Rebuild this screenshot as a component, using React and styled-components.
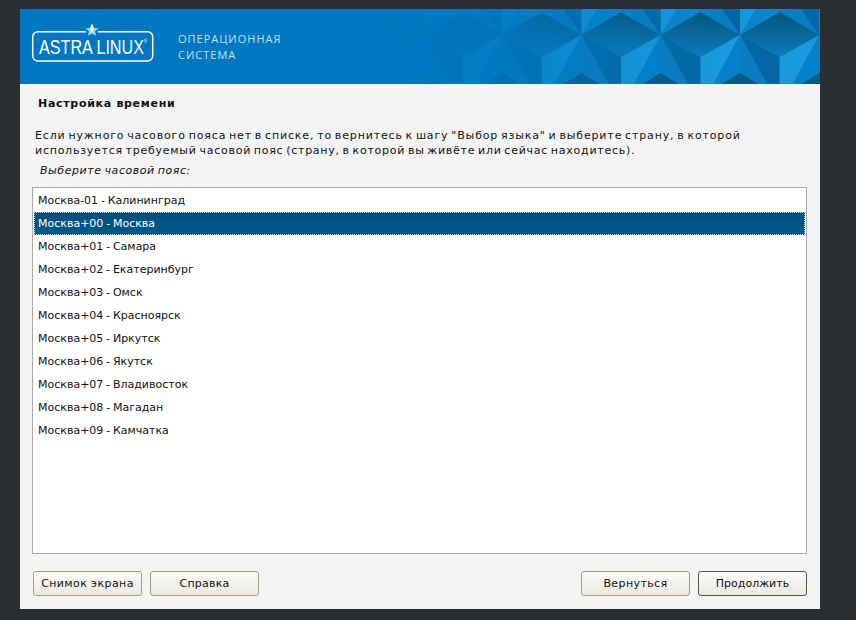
import React from 'react';
import styled, { createGlobalStyle } from 'styled-components';

const GlobalStyle = createGlobalStyle`
  html, body {
    margin: 0;
    padding: 0;
    background: #2a2d32;
  }
`;

const Page = styled.div`
  width: 856px;
  height: 620px;
  padding: 9px 0 0 20px;
  box-sizing: border-box;
  overflow: hidden;
  font-family: "DejaVu Sans", sans-serif;
  font-size: 11px;
  color: #111;
`;

const Installer = styled.div`
  width: 800px;
  height: 600px;
  display: flex;
  flex-direction: column;
  background: #f4f4f4;
`;

const Header = styled.header`
  height: 75px;
  flex: none;
  display: flex;
  background: #0077c0;
`;

const LogoBox = styled.div`
  width: 138px;
  flex: none;
  margin-left: 10px;
`;

const Tagline = styled.div`
  margin: 22px 0 0 10px;
  font-family: "Open Sans", sans-serif;
  font-size: 11px;
  line-height: 16px;
  letter-spacing: 1px;
  color: #c4e2f6;
`;

const Pattern = styled.svg`
  margin-left: auto;
  flex: none;
  display: block;
`;

const Content = styled.main`
  flex: 1;
  display: flex;
  flex-direction: column;
  padding: 11px 13px 13px 12px;
`;

const Title = styled.h1`
  margin: 0 0 0 6px;
  font-size: 11px;
  line-height: 18px;
  font-weight: bold;
  letter-spacing: 0.7px;
  color: #111;
`;

const Description = styled.div`
  margin: 15px 0 0 3px;
  white-space: nowrap;
`;

const DescriptionLine = styled.p`
  margin: 0;
  line-height: 15px;
  letter-spacing: ${({ $spacing }) => $spacing}px;
  word-spacing: -1.5px;
`;

const Prompt = styled.div`
  margin: 5px 0 8px 8px;
  line-height: 16px;
  font-style: italic;
  letter-spacing: 0.55px;
  word-spacing: -1px;
`;

const List = styled.ul`
  height: 367px;
  box-sizing: border-box;
  margin: 0;
  padding: 1px;
  list-style: none;
  background: #fff;
  border: 1px solid #aaa;
`;

const Row = styled.li`
  height: 23px;
  box-sizing: border-box;
  padding-left: 4px;
  line-height: 24px;
  white-space: nowrap;
  word-spacing: -0.7px;
  ${({ $selected }) => $selected && `
    color: #fff;
    line-height: 21px;
    padding-left: 3px;
    background: linear-gradient(#004e7c, #05578a);
    border: 1px dotted #bfe3f5;
  `}
`;

const Footer = styled.footer`
  display: flex;
  gap: 8px;
  margin-top: 17px;
  padding-left: 1px;
`;

const Button = styled.button`
  width: 109px;
  height: 25px;
  padding: 0;
  font: inherit;
  letter-spacing: ${({ $spacing }) => $spacing ?? 0.4}px;
  color: #111;
  background: linear-gradient(#fbfbf9, #ece9e3);
  border: 1px solid ${({ $default }) => ($default ? '#57544d' : '#a39b8b')};
  border-radius: 3px;
`;

const Spacer = styled.div`
  flex: 1;
`;

const zones = [
  'Москва-01 - Калининград',
  'Москва+00 - Москва',
  'Москва+01 - Самара',
  'Москва+02 - Екатеринбург',
  'Москва+03 - Омск',
  'Москва+04 - Красноярск',
  'Москва+05 - Иркутск',
  'Москва+06 - Якутск',
  'Москва+07 - Владивосток',
  'Москва+08 - Магадан',
  'Москва+09 - Камчатка',
];

const Logo = () => (
  <svg width="138" height="75" viewBox="0 0 138 75">
    <path
      d="M56 22.8H7.7a5 5 0 0 0-5 5V47a5 5 0 0 0 5 5h110a5 5 0 0 0 5-5V27.8a5 5 0 0 0-5-5H68"
      fill="none"
      stroke="#fff"
      strokeWidth="1.5"
    />
    <polygon
      points="62,14.5 63.9,18.9 68.5,19.3 65,22.3 66,26.8 62,24.5 58,26.8 59,22.3 55.5,19.3 60.1,18.9"
      fill="#a9d4ef"
    />
    <polygon points="62,14.5 63.9,18.9 62,24.5 60.1,18.9" fill="#e4f3fb" />
    <text
      x="9"
      y="44.5"
      fontFamily="'Liberation Sans Narrow', 'Liberation Sans', sans-serif"
      fontSize="19.5"
      fill="#fff"
      textLength="108"
      lengthAdjust="spacingAndGlyphs"
    >
      ASTRA LINUX
      <tspan dy="-11" fontSize="5">®</tspan>
    </text>
  </svg>
);

const fadeStops = [
  [0, 1],
  [0.1, 0.94],
  [0.28, 0.78],
  [0.45, 0.42],
  [0.64, 0.12],
  [0.8, 0],
];

const HeaderPattern = () => (
  <Pattern width="440" height="75" viewBox="0 0 440 75">
    <defs>
      <linearGradient id="diamond" x1="0" y1="0" x2="0" y2="1">
        <stop offset="0" stopColor="#045478" />
        <stop offset="1" stopColor="#0f7bbf" />
      </linearGradient>
      <linearGradient id="fade" x1="0" y1="0" x2="1" y2="0">
        {fadeStops.map(([offset, opacity]) => (
          <stop key={offset} offset={offset} stopColor="#0077c0" stopOpacity={opacity} />
        ))}
      </linearGradient>
      <pattern id="cubes" x="42.8" y="0" width="79.3" height="75" patternUnits="userSpaceOnUse">
        <rect width="79.3" height="75" fill="#0a80c8" />
        <polygon points="0,26 0,0 16,0" fill="#1a96db" />
        <polygon points="0,26 16,0 45,0 39.65,3.3" fill="#0a84cc" />
        <polygon points="39.65,3.3 39.65,0 61,0 79.3,26" fill="#0b7cc2" />
        <polygon points="61,0 79.3,0 79.3,26" fill="#0467a5" />
        <polygon points="0,26 39.65,3.3 79.3,26 39.65,48.3" fill="url(#diamond)" />
        <polygon points="0,26 39.65,48.3 39.65,75 27,75" fill="#0467a5" />
        <polygon points="0,26 27,75 0,75" fill="#0b7cc2" />
        <polygon points="39.65,48.3 79.3,26 52.6,75 39.65,75" fill="#1a9ade" />
        <polygon points="79.3,26 52.6,75 79.3,75" fill="#0580cb" />
        <polygon points="0,64 18,75 0,75" fill="#045a85" />
        <polygon points="79.3,64 79.3,75 61.3,75" fill="#045a85" />
      </pattern>
    </defs>
    <rect width="440" height="75" fill="url(#cubes)" />
    <rect width="440" height="75" fill="url(#fade)" />
  </Pattern>
);

export default function App() {
  return (
    <Page>
      <GlobalStyle />
      <Installer>
        <Header>
          <LogoBox>
            <Logo />
          </LogoBox>
          <Tagline>
            ОПЕРАЦИОННАЯ
            <br />
            СИСТЕМА
          </Tagline>
          <HeaderPattern />
        </Header>
        <Content>
          <Title>Настройка времени</Title>
          <Description>
            <DescriptionLine $spacing={0.85}>
              Если нужного часового пояса нет в списке, то вернитесь к шагу "Выбор языка" и выберите страну, в которой
            </DescriptionLine>
            <DescriptionLine $spacing={0.75}>
              используется требуемый часовой пояс (страну, в которой вы живёте или сейчас находитесь).
            </DescriptionLine>
          </Description>
          <Prompt>Выберите часовой пояс:</Prompt>
          <List>
            {zones.map((zone, index) => (
              <Row key={zone} $selected={index === 1}>
                {zone}
              </Row>
            ))}
          </List>
          <Footer>
            <Button>Снимок экрана</Button>
            <Button $spacing={0.2}>Справка</Button>
            <Spacer />
            <Button>Вернуться</Button>
            <Button $default $spacing={0}>Продолжить</Button>
          </Footer>
        </Content>
      </Installer>
    </Page>
  );
}
